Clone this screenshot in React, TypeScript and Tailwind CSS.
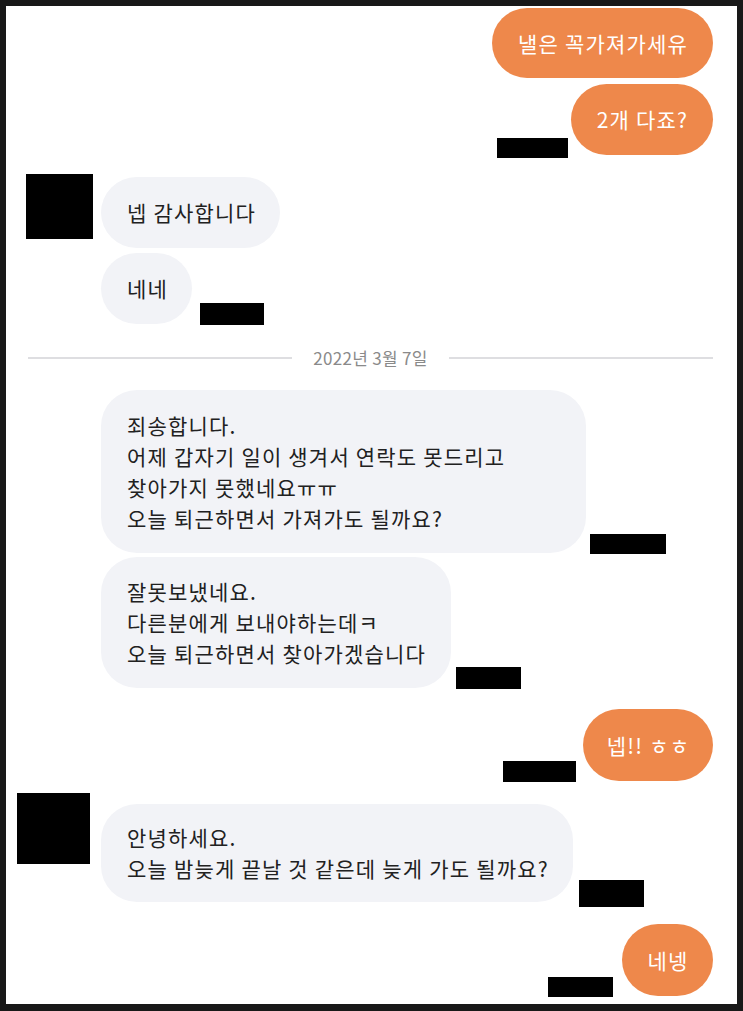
import type { ReactNode } from "react";

const FONT = { fontFamily: '"Noto Sans CJK KR", "Noto Sans", sans-serif' };

function Mine({ w, h, children }: { w: string; h: string; children: ReactNode }) {
  return (
    <div
      className={`flex shrink-0 items-center justify-center rounded-[36px] bg-[#ee884b] pl-[1px] text-[21px] leading-[31px] tracking-[1.2px] text-white ${w} ${h}`}
    >
      {children}
    </div>
  );
}

function Theirs({ w, h, lines }: { w: string; h: string; lines: string[] }) {
  return (
    <div
      className={`flex shrink-0 flex-col justify-center rounded-[36px] bg-[#f2f3f7] pl-[26px] text-[21px] leading-[31px] tracking-[1.2px] text-[#212121] ${w} ${h}`}
    >
      {lines.map((l) => (
        <p key={l} className="whitespace-nowrap">
          {l}
        </p>
      ))}
    </div>
  );
}

// redacted timestamp / avatar blocks
function Block({ className }: { className: string }) {
  return <div className={`shrink-0 bg-black ${className}`} />;
}

export default function App() {
  return (
    <div className="min-h-[1011px] bg-[#181818] pt-[6px] pr-[6px] pb-[7px] pl-[6px]" style={FONT}>
      <div className="flex h-[998px] flex-col overflow-hidden bg-white">
        {/* mine */}
        <div className="mt-[2px] flex justify-end pr-[24px]">
          <Mine w="w-[221px]" h="h-[70px]">낼은 꼭가져가세유</Mine>
        </div>
        <div className="mt-[6px] flex items-end justify-end gap-[3px] pr-[24px]">
          <Block className="mb-[-3px] h-[20px] w-[71px]" />
          <Mine w="w-[142px]" h="h-[71px]">2개 다죠?</Mine>
        </div>

        {/* theirs */}
        <div className="mt-[19px] flex items-start">
          <Block className="ml-[20px] mr-[8px] h-[65px] w-[67px]" />
          <div className="mt-[3px]">
            <Theirs w="w-[179px]" h="h-[71px]" lines={["넵 감사합니다"]} />
          </div>
        </div>
        <div className="mt-[5px] flex items-end gap-[8px] pl-[95px]">
          <Theirs w="w-[91px]" h="h-[71px]" lines={["네네"]} />
          <Block className="mb-[-1px] h-[22px] w-[64px]" />
        </div>

        {/* date divider */}
        <div className="mt-[22px] flex h-[24px] items-center gap-[21px] pl-[22px] pr-[24px]">
          <div className="h-[2px] flex-1 bg-[#dedee1]" />
          <span className="text-[17px] leading-[24px] tracking-[0.3px] text-[#8a8a8a]">2022년 3월 7일</span>
          <div className="h-[2px] flex-1 bg-[#dedee1]" />
        </div>

        <div className="mt-[20px] flex items-end gap-[4px] pl-[95px]">
          <Theirs
            w="w-[485px]"
            h="h-[163px]"
            lines={[
              "죄송합니다.",
              "어제 갑자기 일이 생겨서 연락도 못드리고",
              "찾아가지 못했네요ㅠㅠ",
              "오늘 퇴근하면서 가져가도 될까요?",
            ]}
          />
          <Block className="mb-[-1px] h-[20px] w-[76px]" />
        </div>
        <div className="mt-[4px] flex items-end gap-[5px] pl-[95px]">
          <Theirs
            w="w-[350px]"
            h="h-[131px]"
            lines={["잘못보냈네요.", "다른분에게 보내야하는데ㅋ", "오늘 퇴근하면서 찾아가겠습니다"]}
          />
          <Block className="mb-[-1px] h-[22px] w-[65px]" />
        </div>

        <div className="mt-[21px] flex items-end justify-end gap-[7px] pr-[24px]">
          <Block className="mb-[-1px] h-[21px] w-[73px]" />
          <Mine w="w-[130px]" h="h-[72px]">넵!! ㅎㅎ</Mine>
        </div>

        <div className="mt-[12px] flex items-start">
          <Block className="ml-[11px] mr-[11px] h-[71px] w-[73px]" />
          <div className="mt-[11px] flex items-end gap-[6px]">
            <Theirs
              w="w-[472px]"
              h="h-[98px]"
              lines={["안녕하세요.", "오늘 밤늦게 끝날 것 같은데 늦게 가도 될까요?"]}
            />
            <Block className="mb-[-5px] h-[27px] w-[65px]" />
          </div>
        </div>

        <div className="mt-[22px] flex items-end justify-end gap-[9px] pr-[24px]">
          <Block className="mb-[-1px] h-[20px] w-[65px]" />
          <Mine w="w-[91px]" h="h-[72px]">네넹</Mine>
        </div>
      </div>
    </div>
  );
}
